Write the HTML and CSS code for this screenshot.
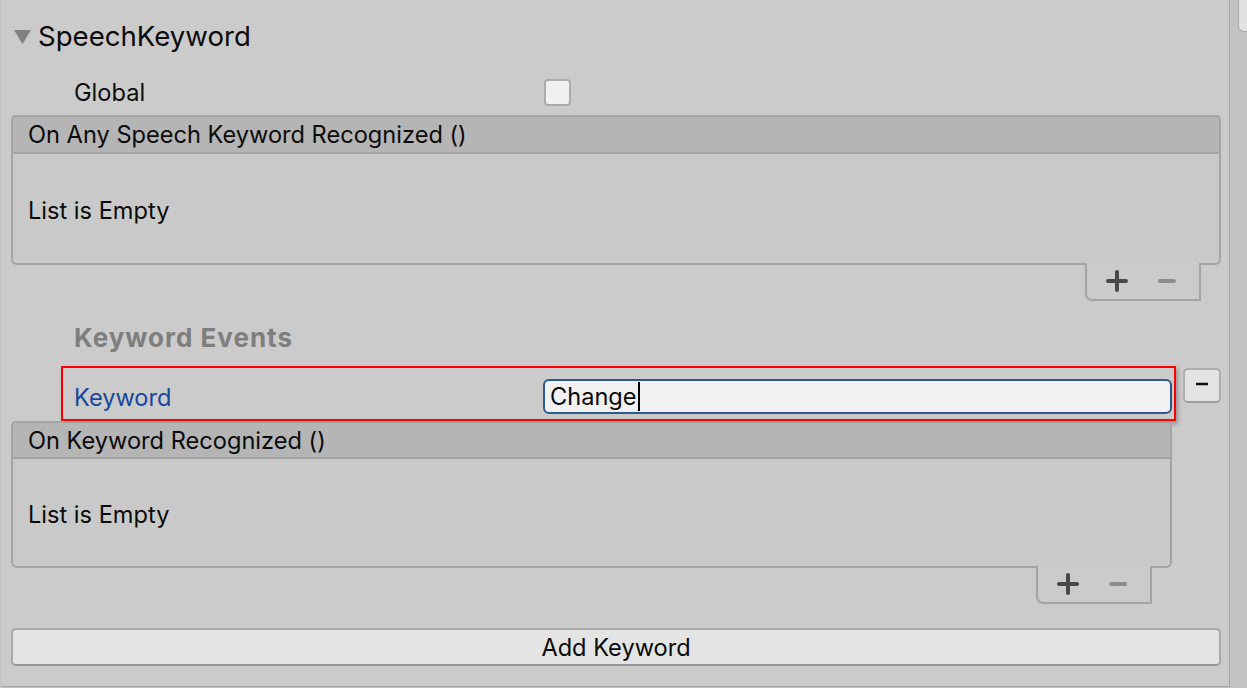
FILE: index.html
```html
<!DOCTYPE html>
<html>
<head>
<meta charset="utf-8">
<link rel="stylesheet" href="styles.css">
</head>
<body>
<div class="window">
  <div class="inspector">
    <div class="component-title">
      <svg class="foldout" width="17" height="16" viewBox="0 0 17 16"><polygon points="0,1 17,1 8.5,15" fill="#808080"/></svg>
      <span class="title-text">SpeechKeyword</span>
    </div>

    <div class="prop-row global-row">
      <span class="prop-label">Global</span>
      <span class="checkbox"></span>
    </div>

    <div class="event">
      <div class="event-header">On Any Speech Keyword Recognized ()</div>
      <div class="event-body">List is Empty</div>
      <div class="event-footer">
        <span class="footer-btn"><svg width="22" height="22" viewBox="0 0 22 22"><path d="M11 2 V20 M2 11 H20" stroke="#484848" stroke-width="4" stroke-linecap="round"/></svg></span>
        <span class="footer-btn"><svg width="20" height="22" viewBox="0 0 20 22"><path d="M3 11 H17" stroke="#8d8d8d" stroke-width="4" stroke-linecap="round"/></svg></span>
      </div>
    </div>

    <div class="section-title">Keyword Events</div>

    <div class="keyword-element">
      <div class="element-main">
        <div class="keyword-row">
          <span class="keyword-label">Keyword</span>
          <span class="text-field">Change<span class="caret"></span></span>
        </div>
        <div class="event event-inner">
          <div class="event-header">On Keyword Recognized ()</div>
          <div class="event-body">List is Empty</div>
          <div class="event-footer">
            <span class="footer-btn"><svg width="22" height="22" viewBox="0 0 22 22"><path d="M11 2 V20 M2 11 H20" stroke="#484848" stroke-width="4" stroke-linecap="round"/></svg></span>
            <span class="footer-btn"><svg width="20" height="22" viewBox="0 0 20 22"><path d="M3 11 H17" stroke="#8d8d8d" stroke-width="4" stroke-linecap="round"/></svg></span>
          </div>
        </div>
      </div>
      <span class="remove-btn"><svg width="14" height="6" viewBox="0 0 14 6"><path d="M1 3 H13" stroke="#111" stroke-width="2.5"/></svg></span>
    </div>

    <div class="add-button">Add Keyword</div>
  </div>
  <div class="scroll-strip"><div class="scroll-thumb"></div></div>
</div>
</body>
</html>
```

FILE: styles.css
```css
html, body {
  margin: 0;
  padding: 0;
}

body {
  background: #c3c3c3;
  font-family: Inter, "Noto Sans", "Liberation Sans", sans-serif;
  color: #0b0b0b;
  overflow: hidden;
}

.window {
  display: flex;
  width: 1247px;
  height: 688px;
}

.inspector {
  box-sizing: border-box;
  width: 1230px;
  height: 687px;
  background: #cbcbcb;
  border-right: 1px solid #a4a4a4;
  border-bottom: 1px solid #a4a4a4;
  border-left: 1px solid #c2c2c2;
  border-bottom-left-radius: 4px;
  padding: 18px 8px 0 10px;
  display: flex;
  flex-direction: column;
}

.component-title {
  height: 36px;
  display: flex;
  align-items: center;
}

.foldout {
  margin-left: 3px;
  margin-top: 2px;
}

.title-text {
  margin-left: 7px;
  font-size: 27.6px;
  color: #0a0a0a;
}

.prop-row {
  display: flex;
  align-items: center;
}

.global-row {
  margin-top: 20px;
  height: 37px;
}

.prop-label {
  box-sizing: border-box;
  width: 533px;
  padding-left: 63px;
  font-size: 23.6px;
}

.checkbox {
  box-sizing: border-box;
  width: 27px;
  height: 27px;
  background: #f0f0f0;
  border: 2px solid #ababab;
  border-radius: 4px;
}

.event {
  margin-top: 4px;
  display: flex;
  flex-direction: column;
}

.event-header {
  box-sizing: border-box;
  height: 39px;
  background: #b5b5b5;
  border: 2px solid #a4a4a4;
  border-radius: 5px 5px 0 0;
  padding-left: 15px;
  display: flex;
  align-items: center;
  font-size: 23.6px;
}

.event-body {
  box-sizing: border-box;
  height: 111px;
  background: #c9c9c9;
  border: 2px solid #a4a4a4;
  border-top: none;
  border-radius: 0 0 6px 6px;
  padding-left: 15px;
  padding-top: 3px;
  display: flex;
  align-items: center;
  font-size: 23.6px;
}

.event-footer {
  box-sizing: border-box;
  align-self: flex-end;
  margin-right: 20px;
  margin-top: -2px;
  width: 116px;
  height: 38px;
  border: 2px solid #a4a4a4;
  border-top: none;
  border-bottom-left-radius: 7px;
  background: #cbcbcb;
  padding-left: 5px;
  display: flex;
  align-items: center;
}

.footer-btn {
  width: 50px;
  display: flex;
  justify-content: center;
  align-items: center;
}

.section-title {
  margin-top: 21px;
  height: 30px;
  padding-left: 63px;
  font-size: 26px;
  letter-spacing: 1px;
  font-weight: 700;
  color: #7e7e7e;
  display: flex;
  align-items: center;
}

.keyword-element {
  margin-top: 14px;
  display: flex;
  align-items: flex-start;
}

.element-main {
  width: 1162px;
  display: flex;
  flex-direction: column;
}

.keyword-row {
  box-sizing: border-box;
  margin-left: 50px;
  margin-right: -4px;
  height: 55px;
  border: 2px solid #ff0000;
  box-shadow: 2px 3px 4px rgba(0, 0, 0, 0.28);
  padding: 11px 2px 5px 11px;
  display: flex;
  align-items: center;
}

.keyword-label {
  width: 469px;
  font-size: 23.6px;
  color: #17479a;
  padding-top: 2px;
}

.text-field {
  box-sizing: border-box;
  flex: 1;
  height: 35px;
  background: #f1f1f1;
  border: 2px solid #2b5a8f;
  border-radius: 6px;
  padding-left: 5px;
  display: flex;
  align-items: center;
  font-size: 23.6px;
  color: #0a0a0a;
}

.caret {
  display: inline-block;
  width: 0;
  height: 29px;
  border-left: 2px solid #000;
  margin-left: 1px;
}

.event-inner {
  margin-top: 0;
}

.event-inner .event-header {
  height: 38px;
  padding-top: 0;
}

.event-inner .event-body {
  height: 109px;
}

.remove-btn {
  box-sizing: border-box;
  margin-left: 11px;
  margin-top: 2px;
  width: 38px;
  height: 35px;
  background: #e4e4e4;
  border: 2px solid #adadad;
  border-bottom-color: #9c9c9c;
  border-radius: 5px;
  display: flex;
  justify-content: center;
  align-items: center;
  padding-bottom: 4px;
}

.add-button {
  box-sizing: border-box;
  margin-top: 24px;
  height: 38px;
  background: #e4e4e4;
  border: 2px solid #a8a8a8;
  border-bottom-color: #979797;
  border-radius: 5px;
  display: flex;
  justify-content: center;
  align-items: center;
  font-size: 23.6px;
  color: #0a0a0a;
}

.scroll-strip {
  width: 17px;
  height: 688px;
  background: #c3c3c3;
}

.scroll-thumb {
  box-sizing: border-box;
  margin-left: 8px;
  width: 9px;
  height: 32px;
  background: #e2e2e2;
  border-left: 1px solid #a8a8a8;
  border-bottom: 1px solid #a8a8a8;
  border-bottom-left-radius: 6px;
}
```
